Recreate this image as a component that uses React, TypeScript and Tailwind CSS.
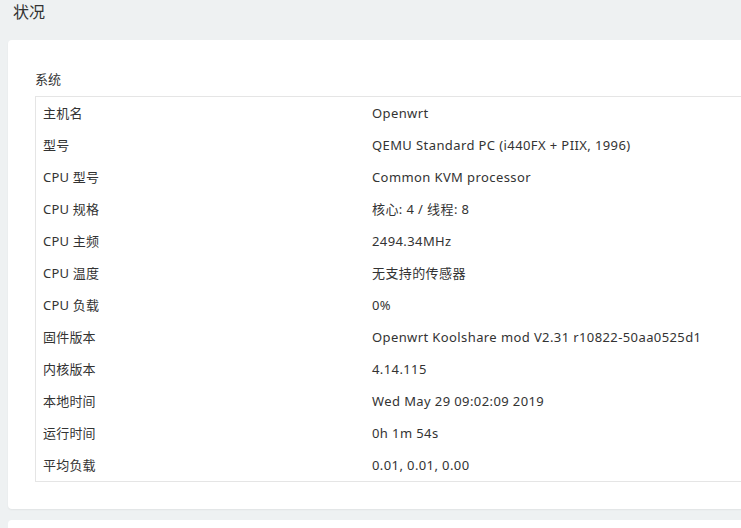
import * as React from 'react';

const rows: [string, string][] = [
  ['主机名', 'Openwrt'],
  ['型号', 'QEMU Standard PC (i440FX + PIIX, 1996)'],
  ['CPU 型号', 'Common KVM processor'],
  ['CPU 规格', '核心: 4 / 线程: 8'],
  ['CPU 主频', '2494.34MHz'],
  ['CPU 温度', '无支持的传感器'],
  ['CPU 负载', '0%'],
  ['固件版本', 'Openwrt Koolshare mod V2.31 r10822-50aa0525d1'],
  ['内核版本', '4.14.115'],
  ['本地时间', 'Wed May 29 09:02:09 2019'],
  ['运行时间', '0h 1m 54s'],
  ['平均负载', '0.01, 0.01, 0.00'],
];

export default function App() {
  return (
    <div
      className="h-[528px] w-[741px] overflow-hidden bg-[#eef1f2] text-[#333]"
      style={{ fontFamily: '"Noto Sans", "Noto Sans CJK SC", sans-serif' }}
    >
      <h2 className="h-[24px] pl-[13px] pt-[2px] text-[16px] leading-[20px] font-normal">状况</h2>
      <div className="ml-[8px] mt-[16px] w-[800px] rounded-[4px] bg-white pb-[27px] pt-[30px] pl-[27px] shadow-[0_1px_2px_rgba(0,0,0,0.06)]">
        <div className="h-[26px] text-[13px] leading-[18px]">系统</div>
        <div className="border border-[#e5e5e5]">
          {rows.map(([k, v]) => (
            <div key={k} className="flex h-[32px] items-center pt-[2px] text-[13px]">
              <div className="w-[336px] shrink-0 pl-[7px] tracking-[0.2px]">{k}</div>
              <div className="tracking-[0.4px]">{v}</div>
            </div>
          ))}
        </div>
      </div>
      <div className="ml-[8px] mt-[11px] h-[40px] w-[800px] rounded-[4px] bg-white" />
    </div>
  );
}
